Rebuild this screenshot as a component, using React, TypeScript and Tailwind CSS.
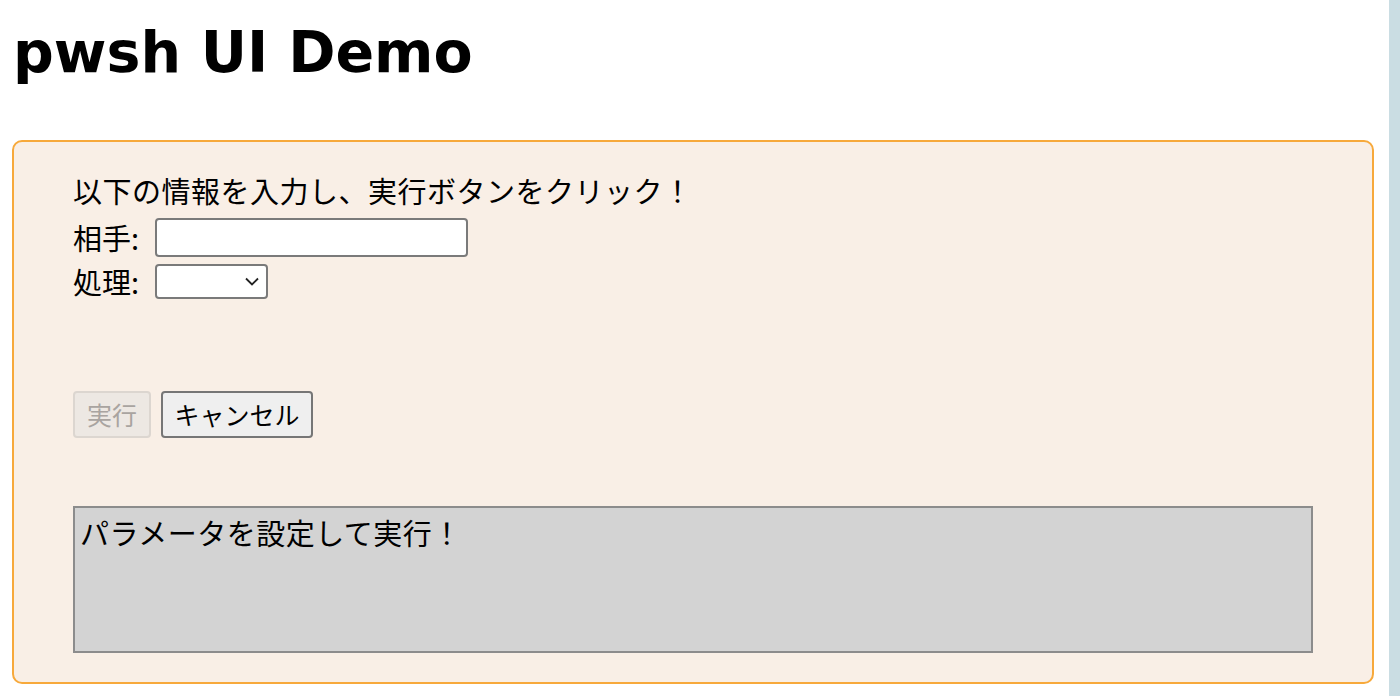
import React from "react";

export default function App() {
  const font = { fontFamily: '"Noto Sans CJK JP", "Noto Sans", sans-serif' };
  return (
    <div className="flex h-[696px] w-[1400px] overflow-hidden bg-white text-black" style={font}>
      <div className="flex-1 pl-[12px] pr-[15px]">
        <h1
          className="mt-[14px] text-[57px] font-bold leading-[76px] pl-[1px]"
          style={{ fontFamily: '"DejaVu Sans", "Noto Sans CJK JP", sans-serif' }}
        >
          pwsh UI Demo
        </h1>
        <div className="mt-[50px] h-[544px] rounded-[10px] border-2 border-[#f7a93b] bg-[#f9efe6] px-[59px] pt-[28px]">
          <div className="text-[29px] leading-[40px] tracking-[0.5px]">以下の情報を入力し、実行ボタンをクリック！</div>
          <div className="mt-[7px] flex items-center text-[29px] leading-[40px]">
            <span className="w-[82px]">相手:</span>
            <div className="h-[39px] w-[313px] rounded-[4px] border-2 border-[#7a7a7a] bg-white" />
          </div>
          <div className="mt-[4px] flex items-center text-[29px] leading-[40px]">
            <span className="w-[82px]">処理:</span>
            <div className="flex h-[35px] w-[113px] items-center justify-end rounded-[4px] border-2 border-[#7a7a7a] bg-white pr-[7px]">
              <svg width="14" height="9" viewBox="0 0 14 9" fill="none">
                <path d="M1 1.5 L7 7.5 L13 1.5" stroke="#222" strokeWidth="1.8" />
              </svg>
            </div>
          </div>
          <div className="mt-[90px] flex gap-[10px]">
            <div className="flex h-[47px] w-[78px] items-center justify-center rounded-[4px] border-2 border-[#dcd6d0] bg-[#ede8e3] text-[25px] text-[#a9a4a0]">
              実行
            </div>
            <div className="flex h-[47px] w-[152px] items-center justify-center rounded-[4px] border-2 border-[#767676] bg-[#efefef] text-[25px] text-black">
              キャンセル
            </div>
          </div>
          <div className="mt-[68px] h-[147px] w-[1240px] border-2 border-[#8c8c8c] bg-[#d3d3d3] px-[5px] pt-[4px] text-[29px] leading-[40px] tracking-[0.5px]">
            パラメータを設定して実行！
          </div>
        </div>
      </div>
      <div className="w-[11px] bg-[#cadde3]" />
    </div>
  );
}
